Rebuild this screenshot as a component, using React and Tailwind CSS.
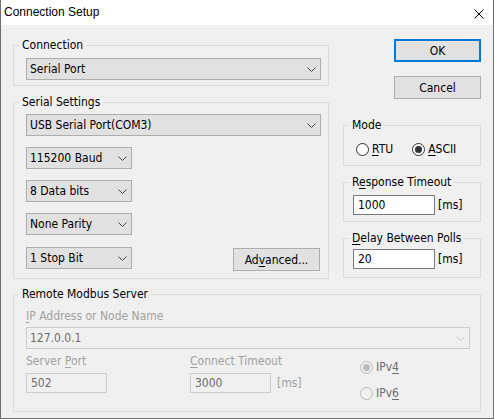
import React from "react";

function Chevron({ color = "#444444" }) {
  return (
    <svg width="9" height="5" viewBox="0 0 9 5" className="shrink-0">
      <polyline points="0.5,0.5 4.5,4.5 8.5,0.5" fill="none" stroke={color} strokeWidth="1" />
    </svg>
  );
}

function Combo({ className = "", children, disabled }) {
  return (
    <div
      className={`h-[22px] flex items-center justify-between pl-[3px] pr-[4px] border ${
        disabled ? "border-[#cccccc] bg-[#f0f0f0] text-[#6d6d6d]" : "border-[#adadad] bg-[#e1e1e1] text-black"
      } ${className}`}
    >
      <span className="leading-[14px] whitespace-nowrap">{children}</span>
      <Chevron color={disabled ? "#c4c4c4" : "#444444"} />
    </div>
  );
}

function Button({ className = "", children, primary }) {
  return (
    <div
      className={`h-[23px] w-[87px] flex items-center justify-center bg-[#e1e1e1] leading-[14px] ${
        primary ? "border-2 border-[#0078d7]" : "border border-[#adadad]"
      } ${className}`}
    >
      {children}
    </div>
  );
}

function Group({ label, className = "", children, bodyClass = "" }) {
  return (
    <fieldset className={`border border-[#dcdcdc] p-0 m-0 min-w-0 ${className}`}>
      <legend className="ml-[5px] px-[3px] leading-[15px] text-black whitespace-nowrap">{label}</legend>
      <div className={bodyClass}>{children}</div>
    </fieldset>
  );
}

function Radio({ checked, disabled, children, className = "" }) {
  return (
    <div className={`flex items-center ${className}`}>
      <div
        className={`w-[13px] h-[13px] rounded-full border flex items-center justify-center ${
          disabled ? "border-[#bcbcbc] bg-[#f0f0f0]" : "border-[#333333] bg-white"
        }`}
      >
        {checked && (
          <div className={`w-[7px] h-[7px] rounded-full ${disabled ? "bg-[#bcbcbc]" : "bg-[#333333]"}`} />
        )}
      </div>
      <span className={`ml-[3px] leading-[14px] ${disabled ? "text-[#6d6d6d]" : "text-black"}`}>{children}</span>
    </div>
  );
}

function TextBox({ className = "", children, disabled }) {
  return (
    <div
      className={`h-[20px] flex items-center pl-[4px] border leading-[14px] ${
        disabled ? "border-[#cccccc] bg-[#f0f0f0] text-[#6d6d6d]" : "border-[#7a7a7a] bg-white text-black"
      } ${className}`}
    >
      {children}
    </div>
  );
}

export default function App() {
  return (
    <div className="w-[494px] h-[419px] bg-[#f0f0f0] border-x border-b border-[#707070] font-['DejaVu_Sans_Condensed','Liberation_Sans',Arial,sans-serif] text-[12px] text-black flex flex-col overflow-hidden">
      {/* Title bar */}
      <div className="h-[25px] bg-white flex items-center justify-between pl-[3px] pr-[9px] shrink-0 font-['Liberation_Sans',Arial,sans-serif]">
        <span className="leading-[15px]">Connection Setup</span>
        <svg width="10" height="10" viewBox="0 0 10 10" className="mt-[2px]">
          <line x1="0.5" y1="0.5" x2="9.5" y2="9.5" stroke="#000" strokeWidth="1" />
          <line x1="9.5" y1="0.5" x2="0.5" y2="9.5" stroke="#000" strokeWidth="1" />
        </svg>
      </div>

      <div className="px-[12px] flex flex-col">
        <div className="flex justify-between items-start">
          {/* Left column */}
          <div className="w-[316px] flex flex-col">
            <Group label="Connection" className="mt-[13px]" bodyClass="pl-[12px] pr-[7px] pt-[5px] pb-[5px]">
              <Combo className="w-[295px]">Serial Port</Combo>
            </Group>

            <Group label="Serial Settings" className="mt-[9px]" bodyClass="pl-[12px] pr-[7px] pt-[4px] pb-[7px]">
              <div className="flex flex-col gap-[11px]">
                <Combo className="w-[295px]">USB Serial Port(COM3)</Combo>
                <Combo className="w-[106px]">115200 Baud</Combo>
                <Combo className="w-[106px]">8 Data bits</Combo>
                <Combo className="w-[106px]">None Parity</Combo>
                <div className="flex justify-between items-start mt-[1px]">
                  <Combo className="w-[106px]">1 Stop Bit</Combo>
                  <Button className="mt-[1px] mr-[1px]">
                    <span>
                      Ad<u className="underline-offset-2">v</u>anced...
                    </span>
                  </Button>
                </div>
              </div>
            </Group>
          </div>

          {/* Right column */}
          <div className="w-[138px] flex flex-col">
            <Button primary className="self-end mt-[14px]">OK</Button>
            <Button className="self-end mt-[14px]">Cancel</Button>

            <Group label="Mode" className="mt-[19px]" bodyClass="pl-[12px] pt-[9px] pb-[9px] flex items-center">
              <Radio>
                <u className="underline-offset-2">R</u>TU
              </Radio>
              <Radio checked className="ml-[19px]">
                <u className="underline-offset-2">A</u>SCII
              </Radio>
            </Group>

            <Group
              label={
                <span>
                  R<u className="underline-offset-2">e</u>sponse Timeout
                </span>
              }
              className="mt-[9px]"
              bodyClass="pl-[9px] pt-[5px] pb-[6px] flex items-center"
            >
              <TextBox className="w-[82px]">1000</TextBox>
              <span className="ml-[3px] leading-[14px]">[ms]</span>
            </Group>

            <Group
              label={
                <span>
                  <u className="underline-offset-2">D</u>elay Between Polls
                </span>
              }
              className="mt-[9px]"
              bodyClass="pl-[9px] pt-[3px] pb-[8px] flex items-center"
            >
              <TextBox className="w-[82px]">20</TextBox>
              <span className="ml-[3px] leading-[14px]">[ms]</span>
            </Group>
          </div>
        </div>

        {/* Remote Modbus Server */}
        <Group label="Remote Modbus Server" className="mt-[8px]" bodyClass="pl-[12px] pt-[7px] pb-[11px]">
          <div className="leading-[15px] text-[#a0a0a0]">
            <u className="underline-offset-2">I</u>P Address or Node Name
          </div>
          <Combo disabled className="w-[444px] mt-[3px]">127.0.0.1</Combo>
          <div className="flex items-start mt-[5px]">
            <div className="w-[164px] flex flex-col">
              <div className="leading-[15px] text-[#a0a0a0]">
                Server <u className="underline-offset-2">P</u>ort
              </div>
              <TextBox disabled className="w-[81px] mt-[4px]">502</TextBox>
            </div>
            <div className="w-[163px] flex flex-col">
              <div className="leading-[15px] text-[#a0a0a0]">
                <u className="underline-offset-2">C</u>onnect Timeout
              </div>
              <div className="flex items-center mt-[4px]">
                <TextBox disabled className="w-[81px]">3000</TextBox>
                <span className="ml-[6px] leading-[14px] text-[#a0a0a0]">[ms]</span>
              </div>
            </div>
            <div className="flex flex-col pt-[6px] pl-[7px]">
              <Radio disabled checked>
                IPv<u className="underline-offset-2">4</u>
              </Radio>
              <Radio disabled className="mt-[12px]">
                IPv<u className="underline-offset-2">6</u>
              </Radio>
            </div>
          </div>
        </Group>
      </div>
    </div>
  );
}
